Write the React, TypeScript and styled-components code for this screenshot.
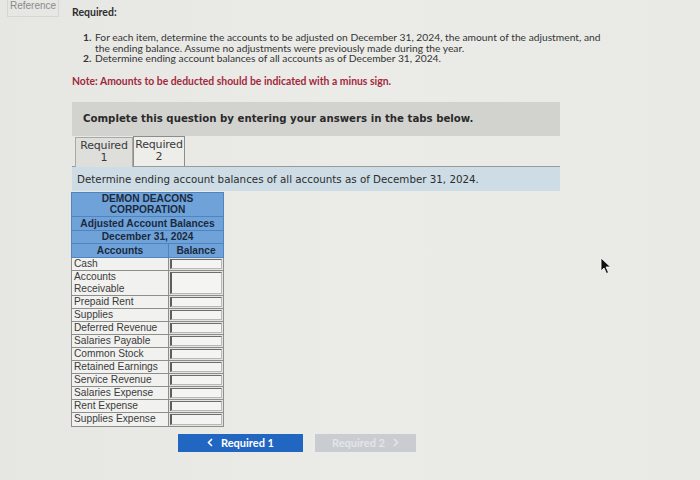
import React from 'react';
import styled, { createGlobalStyle } from 'styled-components';

const Global = createGlobalStyle`
  html, body {
    margin: 0;
    padding: 0;
    background: #e8e8e5;
  }
  body {
    width: 700px;
    height: 480px;
    overflow: hidden;
  }
`;

const Page = styled.div`
  position: relative;
  width: 700px;
  height: 480px;
  box-sizing: border-box;
  padding: 5px 0 0 72px;
  background: linear-gradient(90deg, #e6e6e3 0%, #ebebe8 50%, #e9e9e6 100%);
  color: #333;
  font-family: Lato, "Open Sans", sans-serif;
`;

const RefTag = styled.div`
  position: absolute;
  left: 7px;
  top: 0;
  padding: 0 2px 4px 2px;
  border: 1px solid #d6d6d3;
  border-top: none;
  font-family: "Liberation Sans", Arial, sans-serif;
  font-size: 10px;
  line-height: 12px;
  color: #8a8a8a;
`;

const Heading = styled.div`
  font-size: 10.5px;
  font-weight: 700;
  line-height: 14px;
  color: #2e2e2e;
`;

const Steps = styled.ol`
  margin: 13px 0 0 0;
  padding: 0 0 0 11px;
  list-style: none;
  font-size: 10.25px;
  line-height: 10.5px;
  color: #353535;
`;

const Step = styled.li`
  display: flex;
  width: 540px;
`;

const StepNum = styled.span`
  flex: 0 0 12px;
  font-weight: 700;
`;

const Note = styled.div`
  margin-top: 10px;
  font-size: 10.4px;
  font-weight: 700;
  line-height: 14px;
  color: #a3283c;
`;

const QuestionBox = styled.div`
  margin-top: 14px;
  width: 488px;
  height: 34px;
  box-sizing: border-box;
  padding-left: 11px;
  display: flex;
  align-items: center;
  background: #d2d2cf;
  font-family: "DejaVu Sans", Verdana, sans-serif;
  font-size: 10.2px;
  font-weight: 700;
  color: #2a2a2a;
`;

const Tabs = styled.div`
  display: flex;
  padding-left: 3px;
  height: 31px;
  width: 488px;
  box-sizing: border-box;
  border-bottom: 1px solid #9a9a98;
`;

const Tab = styled.div<{ $active?: boolean }>`
  width: ${p => (p.$active ? 52 : 58)}px;
  height: 30px;
  box-sizing: border-box;
  margin-top: ${p => (p.$active ? 0 : 1)}px;
  border: 1px solid ${p => (p.$active ? '#8c8c8a' : '#a9a9a7')};
  border-bottom: none;
  background: ${p => (p.$active ? '#ededea' : '#dededb')};
  font-family: "DejaVu Sans", Verdana, sans-serif;
  font-size: 11px;
  line-height: 12px;
  color: #3a3a3a;
  text-align: center;
  padding-top: 2px;
  letter-spacing: -0.2px;
  white-space: nowrap;
`;

const Instruction = styled.div`
  width: 488px;
  height: 24px;
  box-sizing: border-box;
  padding-left: 5px;
  display: flex;
  align-items: center;
  background: #cddce5;
  font-family: "DejaVu Sans", Verdana, sans-serif;
  font-size: 10.3px;
  color: #2c2c2c;
`;

const Sheet = styled.table`
  margin: 1px 0 0 -1px;
  border-collapse: collapse;
  width: 152px;
  font-family: "Liberation Sans", Arial, sans-serif;
  font-size: 10.2px;
  table-layout: fixed;
`;

const HeadCell = styled.th<{ $h: number }>`
  height: ${p => p.$h - 1}px;
  padding: 0;
  background: #6ea2d9;
  border: 1px solid #4f84bd;
  color: #1b2a3e;
  font-weight: 700;
  font-size: 10.2px;
  line-height: 11px;
  text-align: center;
`;

const NameCell = styled.td<{ $h: number }>`
  height: ${p => p.$h - 1}px;
  padding: 0 0 0 2px;
  border: 1px solid #8e8e8c;
  background: #f1f1ef;
  color: #3b3b3b;
  line-height: 11.5px;
  vertical-align: middle;
  white-space: pre-line;
  overflow: hidden;
`;

const ValueCell = styled.td`
  padding: 1px;
  border: 1px solid #8e8e8c;
  background: #e4e4e1;
`;

const Input = styled.div<{ $h: number }>`
  height: ${p => p.$h - 3}px;
  box-sizing: border-box;
  border: 1px solid #b8b8b6;
  border-left: 2px solid #5e5e5c;
  border-top: 1px solid #6e6e6c;
  background: #f4f4f2;
`;

const Nav = styled.div`
  display: flex;
  gap: 12px;
  margin: 7px 0 0 106px;
`;

const NavButton = styled.div<{ $disabled?: boolean }>`
  height: 18px;
  box-sizing: border-box;
  display: flex;
  align-items: center;
  justify-content: center;
  gap: 8px;
  width: ${p => (p.$disabled ? 101 : 125)}px;
  background: ${p => (p.$disabled ? '#c9cdd1' : '#2167c1')};
  color: ${p => (p.$disabled ? '#e2e5e8' : '#ffffff')};
  font-family: Lato, "Open Sans", sans-serif;
  font-size: 11px;
  font-weight: 700;
`;

const Cursor = styled.svg`
  position: absolute;
  left: 600px;
  top: 257px;
`;

const accounts: { name: string; h: number }[] = [
  { name: 'Cash', h: 13 },
  { name: 'Accounts\nReceivable', h: 25 },
  { name: 'Prepaid Rent', h: 13 },
  { name: 'Supplies', h: 13 },
  { name: 'Deferred Revenue', h: 13 },
  { name: 'Salaries Payable', h: 13 },
  { name: 'Common Stock', h: 13 },
  { name: 'Retained Earnings', h: 13 },
  { name: 'Service Revenue', h: 13 },
  { name: 'Salaries Expense', h: 13 },
  { name: 'Rent Expense', h: 13 },
  { name: 'Supplies Expense', h: 14 },
];

const Chevron = ({ dir }: { dir: 'left' | 'right' }) => (
  <svg width="6" height="9" viewBox="0 0 6 9">
    <path
      d={dir === 'left' ? 'M5 1 L1.5 4.5 L5 8' : 'M1 1 L4.5 4.5 L1 8'}
      fill="none"
      stroke="currentColor"
      strokeWidth="1.6"
    />
  </svg>
);

export default function App() {
  return (
    <>
      <Global />
      <Page>
        <RefTag>Reference</RefTag>
        <Heading>Required:</Heading>
        <Steps>
          <Step>
            <StepNum>1.</StepNum>
            <span>
              For each item, determine the accounts to be adjusted on December 31, 2024, the amount of the adjustment, and
              <br />
              the ending balance. Assume no adjustments were previously made during the year.
            </span>
          </Step>
          <Step>
            <StepNum>2.</StepNum>
            <span>Determine ending account balances of all accounts as of December 31, 2024.</span>
          </Step>
        </Steps>
        <Note>Note: Amounts to be deducted should be indicated with a minus sign.</Note>

        <QuestionBox>Complete this question by entering your answers in the tabs below.</QuestionBox>

        <Tabs>
          <Tab>Required<br />1</Tab>
          <Tab $active>Required<br />2</Tab>
        </Tabs>
        <Instruction>Determine ending account balances of all accounts as of December 31, 2024.</Instruction>

        <Sheet>
          <colgroup>
            <col style={{ width: 97 }} />
            <col style={{ width: 55 }} />
          </colgroup>
          <thead>
            <tr><HeadCell colSpan={2} $h={24}>DEMON DEACONS<br />CORPORATION</HeadCell></tr>
            <tr><HeadCell colSpan={2} $h={14}>Adjusted Account Balances</HeadCell></tr>
            <tr><HeadCell colSpan={2} $h={13}>December 31, 2024</HeadCell></tr>
            <tr>
              <HeadCell $h={14}>Accounts</HeadCell>
              <HeadCell $h={14}>Balance</HeadCell>
            </tr>
          </thead>
          <tbody>
            {accounts.map(a => (
              <tr key={a.name}>
                <NameCell $h={a.h}>{a.name}</NameCell>
                <ValueCell><Input $h={a.h} /></ValueCell>
              </tr>
            ))}
          </tbody>
        </Sheet>

        <Nav>
          <NavButton><Chevron dir="left" />Required 1</NavButton>
          <NavButton $disabled>Required 2<Chevron dir="right" /></NavButton>
        </Nav>

        <Cursor width="12" height="18" viewBox="0 0 12 18">
          <path d="M1 1 L1 14 L4 11 L6.5 16.5 L8.5 15.5 L6 10 L10.5 10 Z" fill="#111" stroke="#fff" strokeWidth="0.8" />
        </Cursor>
      </Page>
    </>
  );
}
